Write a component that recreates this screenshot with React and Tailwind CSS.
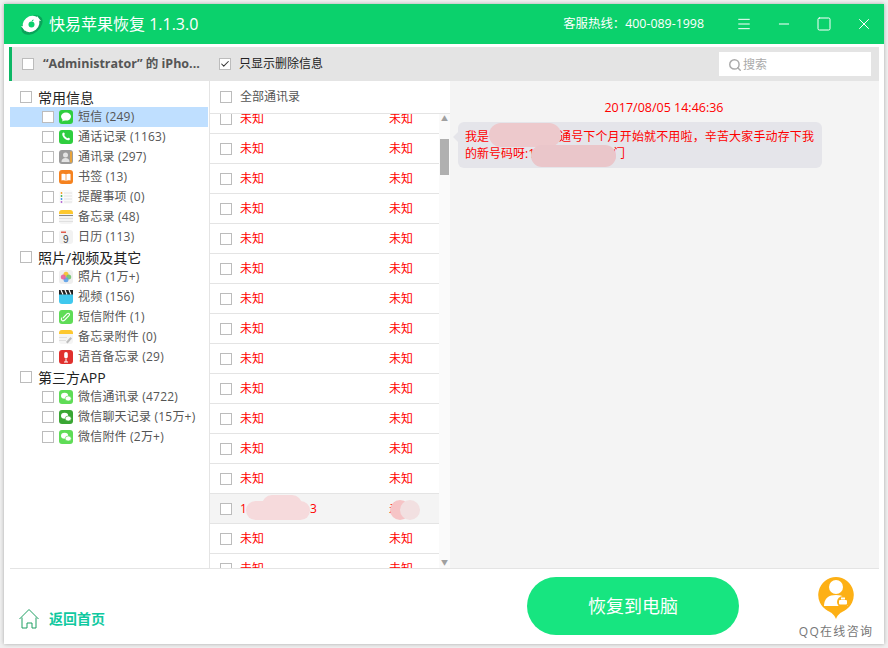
import { Menu, Minus, Square, X, Search, Check } from "lucide-react";

const cjk = "font-['Open_Sans','Noto_Sans_CJK_SC',sans-serif]";

const Box = ({ checked }) => (
    <span className="w-3 h-3 shrink-0 border border-[#bcbcbc] bg-white flex items-center justify-center">
        {checked && <Check size={12} strokeWidth={2.5} className="text-[#333]" />}
    </span>
);

// small app icons for the tree
const Tile = ({ bg, children }) => (
    <svg width="14" height="14" viewBox="0 0 14 14" className="shrink-0">
        <rect width="14" height="14" rx="3" fill={bg} />
        {children}
    </svg>
);

const icons = {
    sms: <Tile bg="#2fce3f"><ellipse cx="7" cy="6.6" rx="5" ry="4" fill="#fff" /><path d="M4 9l-1 2.5L6 10z" fill="#fff" /></Tile>,
    phone: <Tile bg="#2fce3f"><path d="M3.5 3c1-1 1.7-.6 2.2.6.3.7-.3 1-.4 1.5.4 1.300 1.700 2.600 3 3.100.5-.1.800-.7 1.500-.4 1.200.5 1.600 1.200.6 2.200-3 1.500-8.300-3.600-6.900-7z" fill="#fff" /></Tile>,
    contact: <Tile bg="#9c9c9c"><rect x="11" y="1.500" width="2" height="11" fill="#e8a33a" /><circle cx="6.500" cy="5" r="2.500" fill="#e4e4e4" /><path d="M2.500 12c0-3 1.800-4 4-4s4 1 4 4z" fill="#e4e4e4" /></Tile>,
    book: <Tile bg="#f5821f"><path d="M2.500 4c2-.6 3.500-.4 4.500.5 1-.9 2.500-1.100 4.500-.5v6.500c-2-.5-3.500-.3-4.500.5-1-.8-2.500-1-4.500-.5z" fill="#fff" /><path d="M7 4.500V11" stroke="#f5821f" strokeWidth=".7" /></Tile>,
    remind: <Tile bg="#fafafa"><circle cx="2.500" cy="3" r=".9" fill="#f39b1e" /><circle cx="2.500" cy="6" r=".9" fill="#3fae4a" /><circle cx="2.500" cy="9" r=".9" fill="#3a8ee6" /><circle cx="2.500" cy="12" r=".9" fill="#b05fd0" /><path d="M5 3h8M5 6h8M5 9h8M5 12h8" stroke="#e2e2e2" /></Tile>,
    note: <Tile bg="#f4f4f4"><path d="M0 3a3 3 0 013-3h8a3 3 0 013 3v1H0z" fill="#fdc82f" /><rect y="5" width="14" height="1" fill="#888" /><path d="M0 8.500h14M0 11.500h14" stroke="#e0e0e0" /></Tile>,
    cal: <Tile bg="#f2f2f2"><rect x="2" y="1.500" width="5" height="1.500" fill="#e25b4c" /><text x="7" y="12.500" textAnchor="middle" fontSize="10" fill="#444" fontFamily="Liberation Sans">9</text></Tile>,
    photo: <Tile bg="#efefef"><circle cx="7" cy="4.300" r="2.500" fill="#f6c33d" /><circle cx="9.700" cy="7" r="2.500" fill="#6fc36b" opacity=".9" /><circle cx="7" cy="9.700" r="2.500" fill="#5a9fe8" opacity=".9" /><circle cx="4.300" cy="7" r="2.500" fill="#e5609a" opacity=".9" /></Tile>,
    video: <Tile bg="#3fc8ee"><rect width="14" height="4.500" fill="#222" /><path d="M2 0l2 4.500M6 0l2 4.500M10 0l2 4.500" stroke="#fff" strokeWidth="1.200" /></Tile>,
    clip: <Tile bg="#5fdc57"><path d="M4 8l4.200-4.300c1.500-1.400 3.200.5 1.800 1.900L5.700 10c-2.300 2.200-4.500-.4-2.700-2.300" fill="none" stroke="#fff" strokeWidth="1.100" /></Tile>,
    noteclip: <Tile bg="#f5f5f5"><path d="M0 3a3 3 0 013-3h8a3 3 0 013 3v1H0z" fill="#fdc82f" /><path d="M0 7.500h8M0 10.500h7" stroke="#e0e0e0" /><path d="M7 12l4.500-5 1.500 1.500-4.500 5z" fill="#bdbdbd" /></Tile>,
    voice: <Tile bg="#e0302d"><rect x="5.200" y="2" width="3.600" height="6.500" rx="1.800" fill="#fff" /><path d="M7 9v3M5 12h4" stroke="#fff" /></Tile>,
    wx: <Tile bg="#5fdc57"><ellipse cx="5.600" cy="5.800" rx="3.600" ry="3" fill="#fff" /><ellipse cx="9.200" cy="8.500" rx="3" ry="2.500" fill="#fff" stroke="#5fdc57" strokeWidth=".6" /></Tile>,
    wxdark: <Tile bg="#3aa634"><ellipse cx="5.600" cy="5.800" rx="3.600" ry="3" fill="#fff" /><ellipse cx="9.200" cy="8.500" rx="3" ry="2.500" fill="#fff" stroke="#3aa634" strokeWidth=".6" /></Tile>,
};

const groups = [
    {
        name: "常用信息",
        items: [
            ["sms", "短信 (249)", true],
            ["phone", "通话记录 (1163)"],
            ["contact", "通讯录 (297)"],
            ["book", "书签 (13)"],
            ["remind", "提醒事项 (0)"],
            ["note", "备忘录 (48)"],
            ["cal", "日历 (113)"],
        ],
    },
    {
        name: "照片/视频及其它",
        items: [
            ["photo", "照片 (1万+)"],
            ["video", "视频 (156)"],
            ["clip", "短信附件 (1)"],
            ["noteclip", "备忘录附件 (0)"],
            ["voice", "语音备忘录 (29)"],
        ],
    },
    {
        name: "第三方APP",
        items: [
            ["wx", "微信通讯录 (4722)"],
            ["wxdark", "微信聊天记录 (15万+)"],
            ["wx", "微信附件 (2万+)"],
        ],
    },
];

const rows = Array.from({ length: 16 }, (_, i) => i);

export default function App() {
    return (
        <div className={`w-[888px] h-[648px] bg-[#f0f0f0] p-1 overflow-hidden ${cjk}`}>
            <div className="w-[880px] h-[640px] bg-white flex flex-col shadow-[0_0_4px_rgba(0,0,0,0.3)]">
                {/* title bar */}
                <div className="h-10 shrink-0 bg-[#0bd16c] flex items-center text-white">
                    <svg width="26" height="26" viewBox="0 0 26 26" className="ml-[14px] shrink-0">
                        <ellipse cx="14" cy="14" rx="12" ry="8" transform="rotate(-40 14 14)" fill="#0aa35a" />
                        <ellipse cx="13" cy="13" rx="9" ry="7.500" transform="rotate(-40 13 13)" fill="#fff" />
                        <path d="M3 15l6 1-2 4z" fill="#fff" />
                        <path d="M23 10l-6-1 2-4z" fill="#fff" />
                        <circle cx="13.500" cy="13.500" r="3" fill="#0bd16c" />
                        <path d="M13.500 10.500c.3-1.200 1-1.800 2.200-2-.1 1.200-.8 1.900-2.200 2z" fill="#0bd16c" />
                    </svg>
                    <span className="ml-[5px] text-base">快易苹果恢复 1.1.3.0</span>
                    <span className="ml-auto mr-[20px] text-[12.4px]">客服热线：400-089-1998</span>
                    <div className="w-[160px] flex shrink-0">
                        <div className="w-10 h-10 flex items-center justify-center"><Menu size={16} absoluteStrokeWidth strokeWidth={1} /></div>
                        <div className="w-10 h-10 flex items-center justify-center"><Minus size={16} absoluteStrokeWidth strokeWidth={1} /></div>
                        <div className="w-10 h-10 flex items-center justify-center"><Square size={16} absoluteStrokeWidth strokeWidth={1} /></div>
                        <div className="w-10 h-10 flex items-center justify-center"><X size={18} absoluteStrokeWidth strokeWidth={1} /></div>
                    </div>
                </div>

                {/* toolbar */}
                <div className="mt-[3px] ml-[5px] mr-[5px] h-[34px] shrink-0 bg-[#e4e4e4] border-l-[3px] border-[#0cb765] flex items-center">
                    <span className="ml-[10px]"><Box /></span>
                    <span className="ml-[9px] w-[176px] text-[12.5px] font-bold text-[#555] whitespace-nowrap">“Administrator” 的 iPho...</span>
                    <Box checked />
                    <span className="ml-2 text-xs text-[#222]">只显示删除信息</span>
                    <div className="ml-auto mr-2 w-[152px] h-6 bg-white flex items-center pl-[9px] pt-[2px] gap-[1px] text-xs text-[#aaa]">
                        <Search size={14} strokeWidth={2.5} className="text-[#aaa]" />
                        <span>搜索</span>
                    </div>
                </div>

                <div className="flex-1 flex min-h-0 ml-[6px] mr-[5px] border-b border-[#e4e4e4]">
                    {/* tree */}
                    <div className="w-[200px] shrink-0 pt-[6px] border-r border-[#e4e4e4]">
                        {groups.map((g) => (
                            <div key={g.name}>
                                <div className="h-5 flex items-center pl-[10px] text-sm text-[#222]">
                                    <Box />
                                    <span className="ml-[6px] pt-[2px]">{g.name}</span>
                                </div>
                                {g.items.map(([icon, label, active]) => (
                                    <div key={label} className={`h-5 w-[198px] flex items-center pl-8 text-xs tracking-[0.2px] text-[#555] ${active ? "bg-[#bfdfff]" : ""}`}>
                                        <Box />
                                        <span className="ml-[5px]">{icons[icon]}</span>
                                        <span className="ml-[5px] whitespace-nowrap">{label}</span>
                                    </div>
                                ))}
                            </div>
                        ))}
                    </div>

                    {/* contact list */}
                    <div className="w-[240px] shrink-0 flex flex-col min-h-0">
                        <div className="h-[33px] shrink-0 flex items-center pl-[10px] border-b border-[#e4e4e4] text-xs text-[#555]">
                            <Box />
                            <span className="ml-2">全部通讯录</span>
                        </div>
                        <div className="flex-1 flex min-h-0">
                            <div className="w-[229px] overflow-hidden">
                                <div className="-mt-[10px]">
                                    {rows.map((i) => (
                                        <div key={i} className={`relative h-[30px] flex items-center pl-[10px] border-b border-[#e4e4e4] text-xs text-[#f00] ${i === 13 ? "bg-[#f4f4f4]" : ""}`}>
                                            <Box />
                                            {i === 13 ? (
                                                <>
                                                    <span className="ml-2 w-[149px]">1<span className="ml-[63px]">3</span></span>
                                                    <span>未</span>
                                                    <span className="absolute left-[36px] top-[7px] w-[64px] h-[19px] rounded-full bg-[#f6dadc]"></span>
                                                    <span className="absolute left-[52px] top-[1px] w-[40px] h-[20px] rounded-full bg-[#f6dadc]"></span>
                                                    <span className="absolute left-[180px] top-[6px] w-5 h-5 rounded-full bg-[#f6c4c6]"></span>
                                                    <span className="absolute left-[190px] top-[6px] w-5 h-5 rounded-full bg-[#f2e0e1]"></span>
                                                </>
                                            ) : (
                                                <>
                                                    <span className="ml-2 w-[149px]">未知</span>
                                                    <span>未知</span>
                                                </>
                                            )}
                                        </div>
                                    ))}
                                </div>
                            </div>
                            {/* scrollbar */}
                            <div className="w-[11px] flex flex-col items-center bg-[#fafafa]">
                                <span className="mt-[1px] text-[#a0a0a0] text-[7px] leading-[8px]">▲</span>
                                <div className="mt-[16px] w-[9px] h-9 bg-[#b0b0b0]"></div>
                                <span className="mt-auto mb-[1px] text-[#a0a0a0] text-[7px] leading-[8px]">▼</span>
                            </div>
                        </div>
                    </div>

                    {/* message */}
                    <div className="flex-1 bg-[#f4f4f4] pl-2 pt-[18px]">
                        <div className="text-center text-[12.5px] leading-[18px] text-[#f00] pr-[9px]">2017/08/05 14:46:36</div>
                        <div className="relative mt-[5px] w-[364px] h-[46px] bg-[#e5e5ea] rounded-md px-[7px] py-[6px] text-xs leading-[17px] text-[#f00]">
                            <span className="absolute -left-[5px] top-[10px] w-0 h-0 border-y-[5px] border-y-transparent border-r-[5px] border-r-[#e5e5ea]"></span>
                            <div className="whitespace-nowrap">我是<span className="ml-[70px] tracking-[0.15px]">通号下个月开始就不用啦，辛苦大家手动存下我</span></div>
                            <div className="whitespace-nowrap">的新号码呀:1<span className="ml-[78px]">门</span></div>
                            <span className="absolute left-[31px] top-[1px] w-[72px] h-6 rounded-full bg-[#edc9cc]"></span>
                            <span className="absolute left-[73px] top-[23px] w-[85px] h-[22px] rounded-full bg-[#eac6ca]"></span>
                        </div>
                    </div>
                </div>

                {/* footer */}
                <div className="h-[75px] shrink-0 flex items-center">
                    <svg width="20" height="20" viewBox="0 0 20 20" className="ml-[15px] mt-[25px] shrink-0" fill="none" stroke="#1f9f63" strokeWidth="1">
                        <path d="M.5 10L10 .5 19.500 10M3 8.500v10.500h5v-5h5v5h4V8.500" />
                    </svg>
                    <span className="ml-[10px] mt-[25px] text-sm font-bold text-[#10c9a0] whitespace-nowrap">返回首页</span>
                    <button className="ml-[422px] w-[212px] h-[58px] rounded-[29px] bg-[#17e580] text-white text-lg -mt-[2px]">恢复到电脑</button>
                    <div className="ml-[60px] w-[74px] flex flex-col items-center">
                        <svg width="36" height="42" viewBox="0 0 36 42" className="mt-[3px] -ml-[1px]">
                            <path d="M18 0a18 18 0 0 1 8 34c-3 1.500-6 3-8 8-2-5-5-6.500-8-8A18 18 0 0 1 18 0z" fill="#fdb015" />
                            <circle cx="18" cy="10" r="7" fill="#fff" />
                            <path d="M6 29c0-8 5-11 12-11s12 3 12 11z" fill="#fff" />
                            <circle cx="25" cy="25" r="6" fill="#fdb015" />
                            <rect x="21" y="23" width="8" height="4.500" rx="1" fill="#fff" />
                            <rect x="23" y="20.500" width="4" height="2" fill="#fff" />
                        </svg>
                        <span className="mt-[5px] text-xs tracking-[1.3px] text-[#777] whitespace-nowrap">QQ在线咨询</span>
                    </div>
                </div>
            </div>
        </div>
    );
}
